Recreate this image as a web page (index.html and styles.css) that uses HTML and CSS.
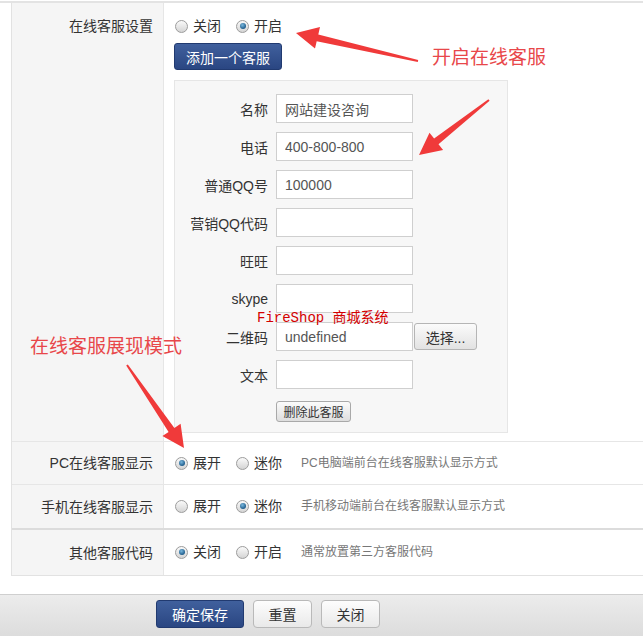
FILE: index.html
```html
<!DOCTYPE html>
<html lang="zh-CN">
<head>
    <meta charset="UTF-8">
    <title>在线客服设置</title>
    <link rel="stylesheet" href="styles.css">
</head>
<body>
    <div id="page">
        <div id="settings">
            <div class="row row-first">
                <div class="label">在线客服设置</div>
                <div class="field">
                    <div class="radios">
                        <label><span class="radio"></span>关闭</label>
                        <label><span class="radio checked"></span>开启</label>
                    </div>
                    <button class="btn btn-primary btn-add">添加一个客服</button>
                    <div class="service-box">
                        <div class="item"><span>名称</span><input type="text" value="网站建设咨询"></div>
                        <div class="item"><span>电话</span><input type="text" value="400-800-800"></div>
                        <div class="item"><span>普通QQ号</span><input type="text" value="100000"></div>
                        <div class="item"><span>营销QQ代码</span><input type="text"></div>
                        <div class="item"><span>旺旺</span><input type="text"></div>
                        <div class="item"><span>skype</span><input type="text"></div>
                        <div class="item"><span>二维码</span><input type="text" value="undefined"><button class="btn btn-select">选择...</button></div>
                        <div class="item"><span>文本</span><input type="text"></div>
                        <button class="btn btn-small">删除此客服</button>
                    </div>
                </div>
            </div>
            <div class="row">
                <div class="label">PC在线客服显示</div>
                <div class="field radios">
                    <label><span class="radio checked"></span>展开</label>
                    <label><span class="radio"></span>迷你</label>
                    <em class="hint">PC电脑端前台在线客服默认显示方式</em>
                </div>
            </div>
            <div class="row row-mobile">
                <div class="label">手机在线客服显示</div>
                <div class="field radios">
                    <label><span class="radio"></span>展开</label>
                    <label><span class="radio checked"></span>迷你</label>
                    <em class="hint">手机移动端前台在线客服默认显示方式</em>
                </div>
            </div>
            <div class="row row-other">
                <div class="label">其他客服代码</div>
                <div class="field radios">
                    <label><span class="radio checked"></span>关闭</label>
                    <label><span class="radio"></span>开启</label>
                    <em class="hint">通常放置第三方客服代码</em>
                </div>
            </div>
        </div>

        <div id="footer">
            <button class="btn btn-primary btn-save">确定保存</button>
            <button class="btn btn-default">重置</button>
            <button class="btn btn-default">关闭</button>
        </div>

        <!-- annotations drawn over the screenshot -->
        <svg class="arrows" width="643" height="636" viewBox="0 0 643 636">
            <polygon points="296,33 320,27 318.3,34.5 418.2,60 417.8,62 316.7,41.3 315,48.6"/>
            <polygon points="419,155 429.5,132.8 434.1,138.6 488.4,99.2 489.6,100.8 438.5,144.2 443.1,150"/>
            <polygon points="184,448 180.6,423.7 174.4,427.9 127.8,364.4 126.2,365.6 168.6,431.9 162.4,436.1"/>
        </svg>
        <div class="note note-open">开启在线客服</div>
        <div class="note note-mode">在线客服展现模式</div>
        <div class="watermark">FireShop 商城系统</div>
    </div>
</body>
</html>
```

FILE: styles.css
```css
* {
    box-sizing: border-box;
}

body {
    margin: 0;
    font-family: 'Liberation Sans', 'Noto Sans CJK SC', sans-serif;
    font-size: 14px;
    color: #333;
    background: #fff;
    overflow: hidden;
}

#page {
    position: relative;
    height: 636px;
    border-top: 2px solid #e3e3e3;
    margin-top: 1px;
}

#settings {
    margin-left: 11px;
    border-left: 1px solid #e2e2e2;
    border-bottom: 1px solid #e2e2e2;
}

.row {
    display: grid;
    grid-template-columns: 152px 1fr;
    border-bottom: 1px solid #e6e6e6;
}

.row-mobile {
    border-bottom: 2px solid #dcdcdc;
}

.row-other {
    border-bottom: none;
}

.label {
    background-color: #f5f5f5;
    border-right: 1px solid #e6e6e6;
    text-align: right;
    padding-right: 10px;
    line-height: 20px;
    display: flex;
    align-items: center;
    justify-content: flex-end;
}

.row-first .label {
    align-items: flex-start;
    padding-top: 13px;
}

.field {
    padding: 11px 10px;
}

.row-first .field {
    padding: 13px 10px 8px;
}

.row-mobile .field {
    padding: 11px 10px 12px;
}

.row-other .field {
    padding: 12px 10px 13px;
}

.radios {
    display: flex;
    align-items: center;
    line-height: 20px;
}

.radios label {
    display: flex;
    align-items: center;
    margin-right: 14px;
}

.radio {
    width: 13px;
    height: 13px;
    margin: 0 5px 0 1px;
    border-radius: 50%;
    border: 1px solid #9c9c9c;
    background: linear-gradient(#fafafa, #d4d4d4);
    position: relative;
}

.radio.checked::after {
    content: '';
    position: absolute;
    left: 2.5px;
    top: 2.5px;
    width: 6px;
    height: 6px;
    border-radius: 50%;
    background: radial-gradient(circle at 40% 35%, #7ab8de, #1f5d8c 70%);
}

.hint {
    font-style: normal;
    font-size: 12px;
    color: #777;
    margin-left: 5px;
}

.btn {
    font-family: 'Liberation Sans', 'Noto Sans CJK SC', sans-serif;
    font-size: 14px;
    border-radius: 3px;
    cursor: pointer;
    padding: 0;
}

.btn-primary {
    color: #fff;
    background: linear-gradient(#40609d, #2a4682);
    border: 1px solid #213a70;
}

.btn-add {
    display: block;
    width: 108px;
    height: 27px;
    margin-top: 7px;
}

.service-box {
    width: 334px;
    margin-top: 10px;
    background-color: #f7f7f7;
    border: 1px solid #e6e6e6;
    padding: 13px 0 10px;
}

.item {
    display: flex;
    align-items: center;
    height: 29px;
    margin-bottom: 9px;
}

.item span {
    width: 93px;
    margin-right: 8px;
    text-align: right;
}

.item input {
    width: 137px;
    height: 29px;
    border: 1px solid #cfcfcf;
    padding: 0 8px;
    font-family: 'Liberation Sans', 'Noto Sans CJK SC', sans-serif;
    font-size: 14px;
    color: #555;
    background: #fff;
    outline: none;
}

.btn-select {
    width: 63px;
    height: 27px;
    margin-left: 1px;
    color: #333;
    background: linear-gradient(#fbfbfb, #e2e2e2);
    border: 1px solid #b5b5b5;
}

.btn-small {
    display: block;
    margin: 12px 0 0 101px;
    width: 75px;
    height: 21px;
    font-size: 12px;
    color: #333;
    background: linear-gradient(#fbfbfb, #dedede);
    border: 1px solid #a9a9a9;
}

#footer {
    position: absolute;
    left: 0;
    right: 0;
    top: 591px;
    bottom: 0;
    background: linear-gradient(#ececec, #dcdcdc);
    border-top: 1px solid #cfcfcf;
    padding: 5px 0 0 156px;
    display: flex;
    align-items: flex-start;
    gap: 9px;
}

.btn-save {
    width: 88px;
    height: 28px;
}

.btn-default {
    width: 59px;
    height: 28px;
    color: #333;
    background: linear-gradient(#fdfdfd, #e9e9e9);
    border: 1px solid #b9b9b9;
    border-radius: 4px;
}

.arrows {
    position: absolute;
    left: 0;
    top: -3px;
    fill: #f03a3a;
}

.note {
    position: absolute;
    color: #e8474a;
    font-size: 19px;
    line-height: 24px;
    font-family: 'Noto Sans CJK SC', sans-serif;
}

.note-open {
    left: 432px;
    top: 41px;
}

.note-mode {
    left: 30px;
    top: 330px;
}

.watermark {
    position: absolute;
    left: 257px;
    top: 306px;
    color: #d40000;
    font-family: 'Liberation Mono', 'Noto Sans CJK SC', monospace;
    font-size: 14px;
    line-height: 18px;
}
```
